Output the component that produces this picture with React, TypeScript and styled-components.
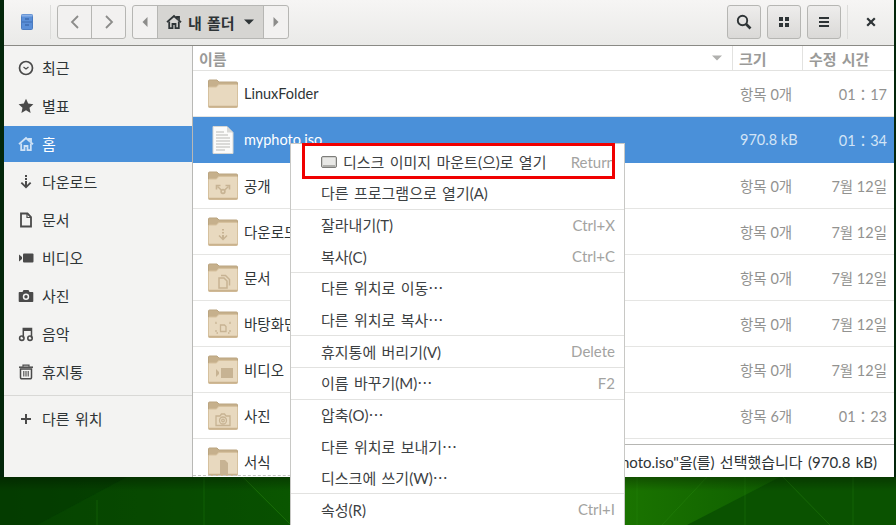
import React from 'react'
import styled, { createGlobalStyle } from 'styled-components'

const FONT = 'Lato, "Noto Sans CJK KR", "Noto Sans", sans-serif'

const GlobalStyle = createGlobalStyle`
  html, body {
    margin: 0;
    padding: 0;
    background: #0a4a00;
    font-family: ${FONT};
  }
`

type IconProps = { size?: number; color?: string }

const ClockIcon = ({ size = 16, color = '#4a4a4a' }: IconProps) => (
  <svg width={size} height={size} viewBox="0 0 16 16" fill="none" stroke={color}>
    <circle cx="8" cy="8" r="6.5" strokeWidth="1.7" />
    <path d="M5.5 7l2.5 2 2.5-2" strokeWidth="1.2" />
  </svg>
)

const StarIcon = ({ size = 16, color = '#4a4a4a' }: IconProps) => (
  <svg width={size} height={size} viewBox="0 0 16 16" fill={color}>
    <path d="M8 .8l2.2 4.8 5.2.6-3.9 3.5 1.1 5.2L8 12.3l-4.6 2.6 1.1-5.2L.6 6.2l5.2-.6z" />
  </svg>
)

const HomeIcon = ({ size = 16, color = '#4a4a4a' }: IconProps) => (
  <svg width={size} height={size} viewBox="0 0 16 16" fill="none" stroke={color} strokeWidth="1.8">
    <path d="M1 8.2L8 2l3 2.7V3h2v3.5l2 1.7" />
    <path d="M3.2 7.5v6.6h3.3V10h3v4.1h3.3V7.5" />
  </svg>
)

const DownloadIcon = ({ size = 16, color = '#4a4a4a' }: IconProps) => (
  <svg width={size} height={size} viewBox="0 0 16 16" fill={color}>
    <rect x="7" y="1" width="2" height="2" />
    <rect x="7" y="4" width="2" height="2" />
    <path d="M7 7h2v4l3-3 1.3 1.3L8 14.6 2.7 9.3 4 8l3 3z" />
  </svg>
)

const DocIcon = ({ size = 16, color = '#4a4a4a' }: IconProps) => (
  <svg width={size} height={size} viewBox="0 0 16 16" fill="none" stroke={color} strokeWidth="1.8">
    <path d="M3 1.5h6.5l3.5 3.5v9.5H3z" />
    <path d="M9 1.5v4h4" strokeWidth="1.2" />
  </svg>
)

const VideoIcon = ({ size = 16, color = '#4a4a4a' }: IconProps) => (
  <svg width={size} height={size} viewBox="0 0 16 16" fill={color}>
    <rect x="5" y="3.5" width="10.5" height="9" rx="1" />
    <path d="M1 4.5l3 2.5v2l-3 2.500z" />
  </svg>
)

const CameraIcon = ({ size = 16, color = '#4a4a4a' }: IconProps) => (
  <svg width={size} height={size} viewBox="0 0 16 16">
    <path fill={color} d="M5.500 2h5l1 2H14.500a.8.8 0 0 1 .8.8v8.400a.8.8 0 0 1-.8.800h-13a.8.8 0 0 1-.8-.800V4.800a.8.8 0 0 1 .8-.800H4.500z" />
    <circle cx="8" cy="8.800" r="3.200" fill="#f3f3f2" />
    <circle cx="8" cy="8.800" r="1.700" fill={color} />
  </svg>
)

const MusicIcon = ({ size = 16, color = '#4a4a4a' }: IconProps) => (
  <svg width={size} height={size} viewBox="0 0 16 16" fill="none" stroke={color}>
    <circle cx="3.800" cy="12.200" r="2.200" strokeWidth="1.600" />
    <circle cx="12" cy="12.200" r="2.200" strokeWidth="1.600" />
    <path d="M5.300 12V2.500h8.200V12" strokeWidth="1.500" />
    <path d="M5.300 4h8.200" strokeWidth="2" />
  </svg>
)

const TrashIcon = ({ size = 16, color = '#4a4a4a' }: IconProps) => (
  <svg width={size} height={size} viewBox="0 0 16 16" fill="none" stroke={color}>
    <path d="M1 3.200h14" strokeWidth="1.500" />
    <path d="M5 2.800V1.200h6v1.600" strokeWidth="1.200" />
    <path d="M2.500 5h11v8.500a1.200 1.200 0 0 1-1.200 1.200H3.700a1.200 1.200 0 0 1-1.200-1.200z" strokeWidth="1.500" />
    <path d="M5.800 7v5.500M8 7v5.500M10.200 7v5.500" strokeWidth="1.100" />
  </svg>
)

const PlusIcon = ({ size = 16, color = '#4a4a4a' }: IconProps) => (
  <svg width={size} height={size} viewBox="0 0 16 16" fill={color}>
    <rect x="7" y="3" width="2" height="10" />
    <rect x="3" y="7" width="10" height="2" />
  </svg>
)

const CabinetIcon = () => (
  <svg width="12" height="16" viewBox="0 0 12 16">
    <rect x="0.500" y="0.500" width="11" height="15" rx="1" fill="#5a8fd8" stroke="#4a7cc2" />
    <rect x="0.500" y="0.500" width="11" height="2" fill="#8ab0e6" />
    <path d="M1 8h10" stroke="#3f6db0" />
    <rect x="4" y="4.500" width="4" height="1" fill="#2f5a9c" />
    <rect x="4" y="10.500" width="4" height="1" fill="#2f5a9c" />
  </svg>
)

const FileIcon = () => (
  <svg width="22" height="28" viewBox="0 0 22 28">
    <path d="M1 .5h14l6 6v21H1z" fill="#fbfbfa" stroke="#d6d6d3" />
    <path d="M15 .5v6h6z" fill="#d8d8d5" />
    <path d="M4 6h8M4 9h12M4 12h14M4 15h14M4 18h14M4 21h14M4 24h9" stroke="#b9b9b6" />
  </svg>
)

const DiskIcon = () => (
  <svg width="16" height="14" viewBox="0 0 16 14">
    <rect x="0.500" y="1.500" width="15" height="11" rx="1.500" fill="#cfcfcc" stroke="#7d7d7a" />
    <rect x="2" y="3" width="12" height="7" fill="#e8e8e6" />
    <rect x="2" y="10.500" width="12" height="1" fill="#8f8f8c" />
  </svg>
)

const EMBLEM = '#c7b393'

const emblems: Record<string, React.ReactNode> = {
  share: (
    <g fill="none" stroke={EMBLEM} strokeWidth="1.600">
      <circle cx="15" cy="20.500" r="1.900" />
      <path d="M13.300 19l-3.800-3.500M16.700 19l3.800-3.500" />
      <path d="M8.500 18.500v-4h4M21.500 18.500v-4h-4" />
    </g>
  ),
  download: (
    <g fill={EMBLEM}>
      <rect x="14" y="12" width="2" height="1.500" />
      <rect x="14" y="15" width="2" height="1.500" />
      <path d="M14 18h2v2.500l2.500-2.500 1 1-4.500 4.500-4.500-4.500 1-1 2.500 2.500z" />
    </g>
  ),
  doc: (
    <g fill="none" stroke={EMBLEM} strokeWidth="1.500">
      <path d="M11 15h5l3 3v7h-8z" />
      <path d="M13 12.500h4.500l4 4v6" />
    </g>
  ),
  desktop: (
    <g fill="none" stroke={EMBLEM} strokeWidth="1.300">
      <path d="M12.500 16h4l1.500 1.500v5h-5.500z" />
      <path d="M8 15v-1.500h2M22 15v-1.500h-2M8 21v3h2M22 21v3h-2" strokeDasharray="2 1.500" />
    </g>
  ),
  video: (
    <g fill={EMBLEM}>
      <rect x="13" y="13" width="12" height="10" />
      <path d="M8 14l3 3v2l-3 3z" />
    </g>
  ),
  camera: (
    <g fill="none" stroke={EMBLEM} strokeWidth="1.300">
      <path d="M8 15h4l1.500-2h3l1.500 2h4v9.500H8z" />
      <circle cx="15" cy="19.500" r="3.500" />
      <circle cx="15" cy="19.500" r="1.300" />
    </g>
  ),
  template: (
    <g fill={EMBLEM}>
      <path d="M12 13h5l3 3v11h-8z" />
    </g>
  ),
}

const FolderIcon = ({ emblem }: { emblem?: string }) => (
  <svg width="30" height="30" viewBox="0 0 30 30">
    <path d="M.5 2a1 1 0 0 1 1-1H9l2 2H28.500a1 1 0 0 1 1 1V12H.5z" fill="#c6b08c" stroke="#bba580" />
    <path d="M.5 9a1 1 0 0 1 1-1H8c1.500 0 1.500-2.500 3-2.500h17.500a1 1 0 0 1 1 1V27.500a1 1 0 0 1-1 1h-27a1 1 0 0 1-1-1z" fill="#e8d9bf" stroke="#d6c19e" />
    <path d="M.5 26.800h29v1a.8.8 0 0 1-.8.800H1.300a.8.8 0 0 1-.8-.800z" fill="#c9b28d" />
    {emblem && emblems[emblem]}
  </svg>
)

const sidebarItems = [
  { label: '최근', Icon: ClockIcon },
  { label: '별표', Icon: StarIcon },
  { label: '홈', Icon: HomeIcon, selected: true },
  { label: '다운로드', Icon: DownloadIcon },
  { label: '문서', Icon: DocIcon },
  { label: '비디오', Icon: VideoIcon },
  { label: '사진', Icon: CameraIcon },
  { label: '음악', Icon: MusicIcon },
  { label: '휴지통', Icon: TrashIcon },
]

const fileRows = [
  { name: 'LinuxFolder', size: '항목 0개', time: '01：17' },
  { name: 'myphoto.iso', size: '970.8 kB', time: '01：34', selected: true, file: true },
  { name: '공개', size: '항목 0개', time: '7월 12일', emblem: 'share' },
  { name: '다운로드', size: '항목 0개', time: '7월 12일', emblem: 'download' },
  { name: '문서', size: '항목 0개', time: '7월 12일', emblem: 'doc' },
  { name: '바탕화면', size: '항목 0개', time: '7월 12일', emblem: 'desktop' },
  { name: '비디오', size: '항목 0개', time: '7월 12일', emblem: 'video' },
  { name: '사진', size: '항목 6개', time: '01：23', emblem: 'camera' },
  { name: '서식', emblem: 'template' },
]

type MenuEntry = { label: string; shortcut?: string; icon?: boolean } | 'sep'

const menuEntries: MenuEntry[] = [
  { label: '디스크 이미지 마운트(으)로 열기', shortcut: 'Return', icon: true },
  { label: '다른 프로그램으로 열기(A)' },
  'sep',
  { label: '잘라내기(T)', shortcut: 'Ctrl+X' },
  { label: '복사(C)', shortcut: 'Ctrl+C' },
  'sep',
  { label: '다른 위치로 이동⋯' },
  { label: '다른 위치로 복사⋯' },
  'sep',
  { label: '휴지통에 버리기(V)', shortcut: 'Delete' },
  'sep',
  { label: '이름 바꾸기(M)⋯', shortcut: 'F2' },
  'sep',
  { label: '압축(O)⋯' },
  { label: '다른 위치로 보내기⋯' },
  { label: '디스크에 쓰기(W)⋯' },
  'sep',
  { label: '속성(R)', shortcut: 'Ctrl+I' },
]

const App = () => {
  return (
    <Page>
      <GlobalStyle />
      <Wallpaper viewBox="0 0 896 525" preserveAspectRatio="none">
        <defs>
          <linearGradient id="wallBase" x1="0" x2="1" y1="0" y2="0">
            <stop offset="0" stopColor="#063f00" />
            <stop offset="0.32" stopColor="#0a5600" />
            <stop offset="0.7" stopColor="#1a7300" />
            <stop offset="0.87" stopColor="#0f5f00" />
            <stop offset="1" stopColor="#0b5400" />
          </linearGradient>
          <linearGradient id="wallShade" x1="0" x2="0" y1="0" y2="1">
            <stop offset="0" stopColor="#000" stopOpacity="0.3" />
            <stop offset="1" stopColor="#000" stopOpacity="0" />
          </linearGradient>
        </defs>
        <rect width="896" height="525" fill="url(#wallBase)" />
        <polygon points="0,477 127,477 37,525 0,525" fill="#043a00" fillOpacity="0.6" />
        <polygon points="127,477 240,477 290,525 37,525" fill="#074800" fillOpacity="0.35" />
        <polygon points="780,477 896,477 896,525 687,525" fill="#0a5200" />
        <path d="M637 477v48M745 477v48M853 477v48M97 500v25M204 477v48" stroke="#2a8a10" strokeOpacity="0.3" />
        <path d="M662 525l45-48M783 477l47 48M243 477l47 47" stroke="#2a8a10" strokeOpacity="0.4" />
        <rect y="477" width="896" height="14" fill="url(#wallShade)" />
      </Wallpaper>

      <Window>
        <HeaderBar>
          <AppIconSlot>
            <CabinetIcon />
          </AppIconSlot>
          <HeaderDivider />
          <ButtonGroup>
            <NavButton>
              <svg width="10" height="14" viewBox="0 0 10 14" fill="none" stroke="#8c8c8a" strokeWidth="1.800">
                <path d="M8 1L2 7l6 6" />
              </svg>
            </NavButton>
            <NavButton>
              <svg width="10" height="14" viewBox="0 0 10 14" fill="none" stroke="#8c8c8a" strokeWidth="1.800">
                <path d="M2 1l6 6-6 6" />
              </svg>
            </NavButton>
          </ButtonGroup>
          <PathBar>
            <PathArrow>
              <svg width="6" height="10" viewBox="0 0 6 10" fill="#8c8c8a">
                <path d="M5.500 0v10L.5 5z" />
              </svg>
            </PathArrow>
            <PathCurrent>
              <HomeIcon size={16} color="#2e3436" />
              <span>내 폴더</span>
              <svg width="10" height="6" viewBox="0 0 10 6" fill="#2e3436">
                <path d="M0 .5h10L5 5.500z" />
              </svg>
            </PathCurrent>
            <PathArrow>
              <svg width="6" height="10" viewBox="0 0 6 10" fill="#8c8c8a">
                <path d="M.5 0v10l5-5z" />
              </svg>
            </PathArrow>
          </PathBar>
          <Spacer />
          <ToolButton>
            <svg width="16" height="16" viewBox="0 0 16 16" fill="none" stroke="#2e3436">
              <circle cx="6.500" cy="6.500" r="4.700" strokeWidth="1.900" />
              <path d="M10 10l4.500 4.500" strokeWidth="2.600" />
            </svg>
          </ToolButton>
          <ToolButton>
            <svg width="16" height="16" viewBox="0 0 16 16" fill="#2e3436">
              <rect x="3" y="3" width="4" height="4" />
              <rect x="9" y="3" width="4" height="4" />
              <rect x="3" y="9" width="4" height="4" />
              <rect x="9" y="9" width="4" height="4" />
            </svg>
          </ToolButton>
          <ToolButton>
            <svg width="16" height="16" viewBox="0 0 16 16" fill="#2e3436">
              <rect x="3" y="3" width="10" height="2" />
              <rect x="3" y="7" width="10" height="2" />
              <rect x="3" y="11" width="10" height="2" />
            </svg>
          </ToolButton>
          <HeaderDivider />
          <CloseSlot>
            <svg width="10" height="10" viewBox="0 0 10 10" fill="none" stroke="#2e3436" strokeWidth="2.200">
              <path d="M1.200 1.200l7.600 7.600M8.800 1.200L1.200 8.800" />
            </svg>
          </CloseSlot>
        </HeaderBar>

        <Body>
          <Sidebar>
            <SidebarList>
              {sidebarItems.map(({ label, Icon, selected }) => (
                <SidebarRow key={label} $selected={selected}>
                  <IconSlot>
                    <Icon color={selected ? '#cfe2f6' : '#4a4a4a'} />
                  </IconSlot>
                  <span>{label}</span>
                </SidebarRow>
              ))}
            </SidebarList>
            <SidebarDivider />
            <SidebarRow>
              <IconSlot>
                <PlusIcon />
              </IconSlot>
              <span>다른 위치</span>
            </SidebarRow>
          </Sidebar>

          <ListPane>
            <ColumnHeader>
              <ColumnName>
                이름
                <svg width="10" height="6" viewBox="0 0 10 6" fill="#b0b0ae">
                  <path d="M0 .5h10L5 5.500z" />
                </svg>
              </ColumnName>
              <ColumnSize>크기</ColumnSize>
              <ColumnTime>수정 시간</ColumnTime>
            </ColumnHeader>
            {fileRows.map((row) => (
              <FileRow key={row.name} $selected={row.selected}>
                <NameCell>
                  <FileIconSlot>{row.file ? <FileIcon /> : <FolderIcon emblem={row.emblem} />}</FileIconSlot>
                  <span>{row.name}</span>
                </NameCell>
                <SizeCell>{row.size}</SizeCell>
                <TimeCell>{row.time}</TimeCell>
              </FileRow>
            ))}
            <RubberLine />
            <StatusOverlay>"myphoto.iso"을(를) 선택했습니다 (970.8 kB)</StatusOverlay>
          </ListPane>
        </Body>
      </Window>

      <ContextMenu>
        {menuEntries.map((entry, i) =>
          entry === 'sep' ? (
            <MenuSeparator key={i} />
          ) : (
            <MenuItem key={entry.label}>
              <MenuLabel>
                {entry.icon && <DiskIcon />}
                <span>{entry.label}</span>
              </MenuLabel>
              {entry.shortcut && <Shortcut>{entry.shortcut}</Shortcut>}
            </MenuItem>
          ),
        )}
      </ContextMenu>
      <Highlight />
    </Page>
  )
}

const Page = styled.div`
  position: relative;
  width: 896px;
  height: 525px;
  overflow: hidden;
  font-size: 15px;
  word-spacing: 1.5px;
  color: #2e3436;
`

const Wallpaper = styled.svg`
  position: absolute;
  inset: 0;
  width: 896px;
  height: 525px;
`

const Window = styled.div`
  position: relative;
  margin-left: 4px;
  width: 890px;
  height: 477px;
  display: flex;
  flex-direction: column;
  overflow: hidden;
  background: #fff;
  box-shadow: 0 0 0 4px #03260a;
  clip-path: inset(0 -4px 0 -4px);
`

const HeaderBar = styled.div`
  flex: none;
  height: 46px;
  box-sizing: border-box;
  border-bottom: 1px solid #8a8a85;
  display: flex;
  align-items: center;
  padding-bottom: 1px;
  background: linear-gradient(#f6f5f4, #eaeae8);
`

const AppIconSlot = styled.div`
  width: 46px;
  display: flex;
  justify-content: center;
  padding-left: 0;
`

const HeaderDivider = styled.div`
  width: 1px;
  height: 34px;
  background: #dcdcda;
`

const ButtonGroup = styled.div`
  display: flex;
  margin-left: 6px;
  height: 34px;
  box-sizing: border-box;
  border: 1px solid #b6b6b3;
  border-radius: 3px;
  background: #f2f1f0;
`

const NavButton = styled.div`
  width: 33px;
  display: flex;
  align-items: center;
  justify-content: center;

  & + & {
    border-left: 1px solid #b6b6b3;
  }
`

const PathBar = styled.div`
  display: flex;
  margin-left: 6px;
  height: 34px;
  box-sizing: border-box;
  border: 1px solid #b6b6b3;
  border-radius: 3px;
  background: #f2f1f0;
`

const PathArrow = styled.div`
  width: 24px;
  display: flex;
  align-items: center;
  justify-content: center;
`

const PathCurrent = styled.div`
  width: 107px;
  box-sizing: border-box;
  display: flex;
  align-items: center;
  gap: 6px;
  padding-left: 8px;
  background: #d6d5d2;
  border-left: 1px solid #b6b6b3;
  border-right: 1px solid #b6b6b3;
  font-weight: 700;

  svg:last-child {
    margin-left: 3px;
  }
`

const Spacer = styled.div`
  flex: 1;
`

const ToolButton = styled.div`
  width: 34px;
  height: 34px;
  box-sizing: border-box;
  margin-right: 6px;
  display: flex;
  align-items: center;
  justify-content: center;
  border: 1px solid #b6b6b3;
  border-radius: 3px;
  background: linear-gradient(#eeedec, #dad9d7);
`

const CloseSlot = styled.div`
  width: 46px;
  display: flex;
  justify-content: center;
`

const Body = styled.div`
  flex: 1;
  min-height: 0;
  display: flex;
`

const Sidebar = styled.div`
  flex: none;
  width: 189px;
  box-sizing: border-box;
  border-right: 1px solid #b8b8b5;
  padding-top: 4px;
  background: #f3f3f2;
`

const SidebarList = styled.div`
  display: flex;
  flex-direction: column;
  gap: 2px;
`

const SidebarRow = styled.div<{ $selected?: boolean }>`
  height: 36px;
  display: flex;
  align-items: center;
  gap: 8px;
  padding-left: 14px;
  background: ${(p) => (p.$selected ? '#4a90d9' : 'transparent')};
  color: ${(p) => (p.$selected ? '#fff' : '#2e3436')};

  span {
    margin-bottom: 2px;
  }
`

const IconSlot = styled.div`
  width: 16px;
  height: 16px;
  display: flex;
  margin-left: 0;
`

const SidebarDivider = styled.div`
  height: 1px;
  margin: 5px 0 5px;
  background: #d8d8d6;
`

const ListPane = styled.div`
  position: relative;
  flex: 1;
  min-width: 0;
  overflow: hidden;
`

const ColumnHeader = styled.div`
  height: 25px;
  box-sizing: border-box;
  display: grid;
  grid-template-columns: 539px 70px 1fr;
  border-bottom: 1px solid #e2e2e0;
  color: #9a9a98;
  font-weight: 700;
`

const ColumnName = styled.div`
  display: flex;
  align-items: center;
  justify-content: space-between;
  padding: 0 10px 0 6px;
`

const ColumnSize = styled.div`
  display: flex;
  align-items: center;
  padding-left: 6px;
  border-left: 1px solid #e2e2e0;
`

const ColumnTime = styled(ColumnSize)``

const FileRow = styled.div<{ $selected?: boolean }>`
  height: 46px;
  box-sizing: border-box;
  display: grid;
  grid-template-columns: 539px 70px 1fr;
  align-items: center;
  border-bottom: 1px solid ${(p) => (p.$selected ? '#4a90d9' : '#e5e5e3')};
  background: ${(p) => (p.$selected ? '#4a90d9' : '#fff')};
  color: ${(p) => (p.$selected ? '#fff' : '#2e3436')};
  font-size: 14.5px;
  word-spacing: 0;
  --meta: ${(p) => (p.$selected ? '#d3e4f6' : '#929290')};
`

const NameCell = styled.div`
  display: flex;
  align-items: center;
  gap: 6px;
  padding-left: 15px;

  span {
    margin-bottom: 1px;
  }
`

const FileIconSlot = styled.div`
  width: 30px;
  height: 30px;
  display: flex;
  align-items: center;
  justify-content: center;
`

const SizeCell = styled.div`
  padding-left: 8px;
  color: var(--meta);
`

const TimeCell = styled.div`
  padding-right: 7px;
  text-align: right;
  color: var(--meta);
`

const RubberLine = styled.div`
  position: absolute;
  left: 0;
  right: 0;
  bottom: 1px;
  border-top: 1px dashed #c4c4c2;
`

const StatusOverlay = styled.div`
  position: absolute;
  right: 0;
  bottom: 0;
  height: 33px;
  box-sizing: border-box;
  display: flex;
  align-items: center;
  padding: 0 17px 0 8px;
  white-space: nowrap;
  background: #fff;
  border-top: 1px solid #b6b6b3;
  color: #2e3436;
`

const ContextMenu = styled.div`
  position: absolute;
  left: 290px;
  top: 143px;
  width: 335px;
  height: 400px;
  box-sizing: border-box;
  padding-top: 2px;
  background: #fff;
  border: 1px solid #c8c8c5;
  color: #3d4143;
`

const MenuItem = styled.div`
  height: 31.33px;
  display: flex;
  align-items: center;
  justify-content: space-between;
  padding: 0 9px 0 30px;
`

const MenuLabel = styled.div`
  display: flex;
  align-items: center;
  gap: 6px;
`

const Shortcut = styled.span`
  color: #a3a3a1;
`

const MenuSeparator = styled.div`
  height: 1px;
  margin-bottom: -0.5px;
  background: #e2e2e0;
`

const Highlight = styled.div`
  position: absolute;
  left: 302px;
  top: 143px;
  width: 313px;
  height: 36px;
  box-sizing: border-box;
  border: 3px solid #f00000;
`

export default App
